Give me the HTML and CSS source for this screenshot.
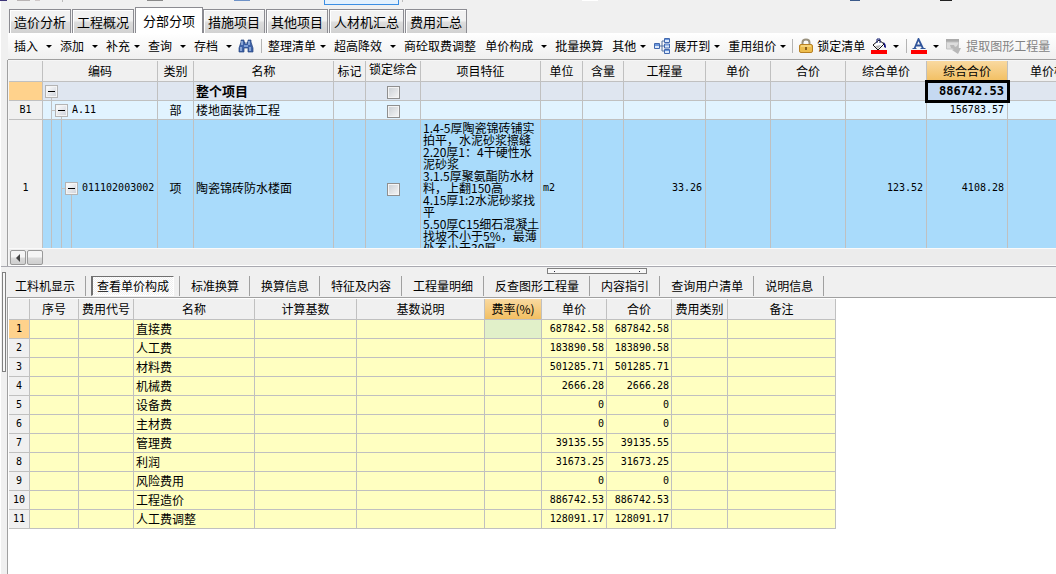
FILE: index.html
```html
<!DOCTYPE html>
<html lang="zh-CN">
<head>
<meta charset="utf-8">
<title>分部分项</title>
<link rel="stylesheet" href="styles.css">
</head>
<body>
<div class="app">
  <div class="ribbon">
    <svg class="ribbon-marks" width="970" height="5" aria-hidden="true">
      <rect x="0" width="7" height="1" fill="#3d3579"/>
      <rect x="17" width="13" height="1" fill="#b9b4b4"/><rect x="35" width="5" height="1" fill="#d0c8c8"/>
      <rect x="62" width="1" height="2" fill="#bbb"/><rect x="147" width="16" height="1" fill="#8a8a8a"/>
      <rect x="234" width="16" height="1" fill="#6f93c8"/>
      <rect x="324.500" y="-2.500" width="74" height="7" fill="#e3f1fe" stroke="#3c8fe4"/>
      <rect x="402" width="1" height="2" fill="#bbb"/><rect x="582" width="16" height="1" fill="#fff"/>
      <rect x="850" width="10" height="1" fill="#3b5a8a"/><rect x="940" width="12" height="1" fill="#222"/>
    </svg>
  </div>
  <nav class="tabs">
    <button class="tab">造价分析</button>
    <button class="tab">工程概况</button>
    <button class="tab active">分部分项</button>
    <button class="tab">措施项目</button>
    <button class="tab">其他项目</button>
    <button class="tab">人材机汇总</button>
    <button class="tab">费用汇总</button>
  </nav>
  <div class="toolbar">
    <button class="tool drop wide">插入</button>
    <button class="tool drop wide">添加</button>
    <button class="tool drop">补充</button>
    <button class="tool drop wide">查询</button>
    <button class="tool drop wide">存档</button>
    <button class="tool icon" aria-label="查找">
      <svg width="16" height="16" viewBox="0 0 16 16"><path d="M3 2h3v2h1v2h2V4h1V2h3v2l2 6v4h-5v-4H6v4H1v-4l2-6z" fill="#3e62a8" stroke="#26457f" stroke-width=".7"/><path d="M4 3v4M11 3v4M3 9v4M12 9v4" stroke="#b9d0f2" stroke-width="1.200"/><path d="M6 7h4v2H6z" fill="#7fa0d8"/></svg>
    </button>
    <span class="sep"></span>
    <button class="tool drop">整理清单</button>
    <button class="tool drop wide">超高降效</button>
    <button class="tool">商砼取费调整</button>
    <button class="tool drop wide">单价构成</button>
    <button class="tool">批量换算</button>
    <button class="tool drop">其他</button>
    <button class="tool drop">
      <svg width="16" height="16" viewBox="0 0 16 16"><path d="M5 8h3M8 3v10M8 3h3M8 8h3M8 13h3" stroke="#52709f" fill="none"/><g fill="#dce9fa" stroke="#4268ae"><path d="M.5 5.500h5v5h-5zM10.500.5h5v4h-5zM10.500 6h5v4h-5zM10.500 11.500h5v4h-5z"/></g><path d="M1 6h4v2H1zM11 1h4v1h-4zM11 6.500h4v1h-4zM11 12h4v1h-4z" fill="#6c98dc"/></svg>展开到</button>
    <button class="tool drop last">重用组价</button>
    <span class="sep"></span>
    <button class="tool lock">
      <svg width="14" height="16" viewBox="0 0 14 16"><path d="M3.500 7V4.500Q3.500 1.500 7 1.500T10.500 4.500V7" fill="none" stroke="#99917e" stroke-width="2"/><rect x=".5" y="6.500" width="13" height="8" rx="1.500" fill="#edbd4e" stroke="#b78023"/><path d="M2 8h10" stroke="#ffe9a5"/><path d="M7 9v3" stroke="#714b14" stroke-width="1.600"/></svg>锁定清单</button>
    <button class="tool drop color" aria-label="背景色">
      <svg width="16" height="16" viewBox="0 0 16 16"><path d="M2 7l6-5 5 4-6 6z" fill="#fff" stroke="#111"/><path d="M6 5V1h3v4" fill="none" stroke="#111a70"/><path d="M4 8l6-1-3 4z" fill="#b5b5b5"/><path d="M12 4q3 1 3 6l-2-1V6z" fill="#101080"/><path d="M0 12h16v4H0z" fill="#f00"/></svg></button>
    <span class="sep"></span>
    <button class="tool drop color" aria-label="字体颜色">
      <svg width="16" height="16" viewBox="0 0 16 16"><path d="M3.500 10.500L7.500 1 12 10.500M5 7.500h5" fill="none" stroke="#31559b" stroke-width="1.800"/><path d="M1.500 10.500h4M9.500 10.500h5" stroke="#31559b"/><path d="M0 12h16v4H0z" fill="#f00"/></svg></button>
    <button class="tool" disabled>
      <svg width="16" height="16" viewBox="0 0 16 16"><path d="M0 1h13v3H0z" fill="#aaa"/><path d="M.5 4h12v7H.5z" fill="#ddd" stroke="#c2c2c2"/><path d="M4 7h4l1 2 2-1 1-2v4h3l-3 6-6-4 2-1-3-1z" fill="#b8b8b8"/></svg>提取图形工程量</button>
  </div>

  <section class="upper">
    <div class="gutter"></div>
    <div class="pane">
      <div class="grid-view">
        <table class="grid bill">
          <colgroup><col class="w34"><col class="w115"><col class="w36"><col class="w140"><col class="w32"><col class="w55"><col class="w120"><col class="w42"><col class="w41"><col class="w82"><col class="w65"><col class="w75"><col class="w81"><col class="w81"><col></colgroup>
          <thead><tr><th></th><th>编码</th><th>类别</th><th>名称</th><th>标记</th><th class="high">锁定综合</th><th>项目特征</th><th>单位</th><th>含量</th><th>工程量</th><th>单价</th><th>合价</th><th>综合单价</th><th class="picked">综合合价</th><th class="cut">单价构成文件</th></tr></thead>
          <tbody>
            <tr class="total"><th class="picked-row"></th><td class="tree t0"><button class="fold" aria-label="折叠"></button></td><td></td><td class="bold">整个项目</td><td></td><td class="mid"><input type="checkbox" aria-label="锁定 整个项目"></td><td></td><td></td><td></td><td></td><td></td><td></td><td></td><td class="num focus">886742.53</td><td></td></tr>
            <tr class="part"><th>B1</th><td class="tree t1"><button class="fold" aria-label="折叠"></button>A.11</td><td class="mid">部</td><td>楼地面装饰工程</td><td></td><td class="mid"><input type="checkbox" aria-label="锁定 楼地面装饰工程"></td><td></td><td></td><td></td><td></td><td></td><td></td><td></td><td class="num">156783.57</td><td></td></tr>
            <tr class="item"><th>1</th><td class="tree t2"><button class="fold" aria-label="折叠"></button>011102003002</td><td class="mid">项</td><td>陶瓷锦砖防水楼面</td><td></td><td class="mid"><input type="checkbox" aria-label="锁定 陶瓷锦砖防水楼面"></td><td class="feature">1.4-5厚陶瓷锦砖铺实<br>拍平，水泥砂浆擦缝<br>2.20厚1：4干硬性水<br>泥砂浆<br>3.1.5厚聚氨酯防水材<br>料，上翻150高<br>4.15厚1:2水泥砂浆找<br>平<br>5.50厚C15细石混凝土<br>找坡不小于5%，最薄<br>处不小于30厚</td><td class="unit">m2</td><td></td><td class="num">33.26</td><td></td><td></td><td class="num">123.52</td><td class="num">4108.28</td><td></td></tr>
          </tbody>
        </table>
      </div>
      <div class="scrollbar"><button aria-label="向左滚动"><svg width="6" height="8" viewBox="0 0 6 8"><path d="M5 0v8L1 4z" fill="#444"/></svg></button><button aria-label="滚动块"></button></div>
    </div>
  </section>

  <section class="lower">
    <div class="gutter"><div class="grip-v"></div></div>
    <div class="detail">
      <div class="grip-row"><div class="grip-h"></div></div>
      <nav class="subtabs">
        <button class="sub">工料机显示</button>
        <button class="sub current"><span>查看单价构成</span></button>
        <button class="sub">标准换算</button>
        <button class="sub">换算信息</button>
        <button class="sub">特征及内容</button>
        <button class="sub">工程量明细</button>
        <button class="sub">反查图形工程量</button>
        <button class="sub">内容指引</button>
        <button class="sub">查询用户清单</button>
        <button class="sub">说明信息</button>
      </nav>
      <div class="pane sheet">
        <table class="grid fees">
          <colgroup><col class="w21"><col class="w49"><col class="w55"><col class="w121"><col class="w102"><col class="w128"><col class="w57"><col class="w65"><col class="w65"><col class="w56"><col class="w108"></colgroup>
          <thead><tr><th></th><th>序号</th><th>费用代号</th><th>名称</th><th>计算基数</th><th>基数说明</th><th class="picked">费率(%)</th><th>单价</th><th>合价</th><th>费用类别</th><th>备注</th></tr></thead>
          <tbody>
            <tr><th class="picked-row">1</th><td></td><td></td><td>直接费</td><td></td><td></td><td class="rate"></td><td class="num">687842.58</td><td class="num">687842.58</td><td></td><td></td></tr>
            <tr><th>2</th><td></td><td></td><td>人工费</td><td></td><td></td><td></td><td class="num">183890.58</td><td class="num">183890.58</td><td></td><td></td></tr>
            <tr><th>3</th><td></td><td></td><td>材料费</td><td></td><td></td><td></td><td class="num">501285.71</td><td class="num">501285.71</td><td></td><td></td></tr>
            <tr><th>4</th><td></td><td></td><td>机械费</td><td></td><td></td><td></td><td class="num">2666.28</td><td class="num">2666.28</td><td></td><td></td></tr>
            <tr><th>5</th><td></td><td></td><td>设备费</td><td></td><td></td><td></td><td class="num">0</td><td class="num">0</td><td></td><td></td></tr>
            <tr><th>6</th><td></td><td></td><td>主材费</td><td></td><td></td><td></td><td class="num">0</td><td class="num">0</td><td></td><td></td></tr>
            <tr><th>7</th><td></td><td></td><td>管理费</td><td></td><td></td><td></td><td class="num">39135.55</td><td class="num">39135.55</td><td></td><td></td></tr>
            <tr><th>8</th><td></td><td></td><td>利润</td><td></td><td></td><td></td><td class="num">31673.25</td><td class="num">31673.25</td><td></td><td></td></tr>
            <tr><th>9</th><td></td><td></td><td>风险费用</td><td></td><td></td><td></td><td class="num">0</td><td class="num">0</td><td></td><td></td></tr>
            <tr><th>10</th><td></td><td></td><td>工程造价</td><td></td><td></td><td></td><td class="num">886742.53</td><td class="num">886742.53</td><td></td><td></td></tr>
            <tr><th>11</th><td></td><td></td><td>人工费调整</td><td></td><td></td><td></td><td class="num">128091.17</td><td class="num">128091.17</td><td></td><td></td></tr>
          </tbody>
        </table>
      </div>
    </div>
  </section>
</div>
</body>
</html>
```
FILE: styles.css
```css
*, *::after { box-sizing: border-box; }
body {
  margin: 0;
  background: #f0f0f0;
  color: #000;
  font: 12px/16px "Noto Sans CJK SC", sans-serif;
  overflow: hidden;
}
button {
  font: inherit;
  color: inherit;
  border: 0;
  padding: 0;
  margin: 0;
  background: none;
  white-space: nowrap;
}
.app { display: flex; flex-direction: column; height: 100vh; border-left: 1px solid #fff; }

.ribbon { height: 7px; overflow: hidden; margin-left: -1px; flex: none; }
.ribbon-marks { display: block; }

/* Page tabs */
.tabs { display: flex; align-items: flex-end; height: 26px; padding-left: 8px; flex: none; }
.tab {
  height: 24px;
  padding: 0 4px;
  font-size: 13px;
  line-height: 20px;
  border: 1px solid #8c8c92;
  border-bottom: 0;
  box-shadow: inset 1px 1px #fff;
  background: linear-gradient(#f2f2f2 45%, #dcdcdc 55%, #d2d2d2);
  margin-right: 1px;
}
.tab.active { height: 26px; padding: 0 7px; background: #fff; margin: 0; }

/* Toolbar */
.toolbar {
  display: flex;
  align-items: center;
  height: 27px;
  margin-left: 7px;
  padding-left: 6px;
  background: linear-gradient(#fff, #f0f0f0);
  border-bottom: 1px solid #a0a0a0;
  overflow: hidden;
  flex: none;
}
.tool { display: flex; align-items: center; gap: 4px; margin-right: 9px; flex: none; }
.tool.drop { margin-right: 8px; }
.tool.wide { gap: 8px; }
.tool.drop::after {
  content: "";
  width: 6px;
  border: 3px solid transparent;
  border-top-color: #000;
  border-bottom: 0;
}
.tool.icon { margin-left: -2px; margin-right: 7px; }
.tool.drop.last { margin-right: 6px; }
.tool.lock { margin-right: 6px; }
.tool.drop.color { gap: 6px; margin-right: 7px; }
.tool:disabled { color: #838383; margin-right: 0; }
.sep { width: 1px; height: 14px; background: #b4b4b4; margin-right: 6px; flex: none; }
.color + .sep { margin-right: 4px; }

/* Panes */
.upper, .lower { display: flex; }
.upper { flex: none; border-bottom: 1px solid #a9a9b0; }
.lower { flex: 1; min-height: 0; }
.gutter { width: 6px; flex: none; }
.pane { flex: 1; min-width: 0; border-left: 1px solid #a0a0a0; padding: 1px 0 0 1px; }
.upper .pane { background: #f6f6f6; }
.grid-view { height: 187px; overflow: hidden; }

.grid { border-collapse: separate; border-spacing: 0; table-layout: fixed; }
.bill { width: 100%; }
.fees { width: 827px; }
.grid th, .grid td {
  padding: 0 2px;
  height: 19px;
  line-height: 16px;
  border-right: 1px solid #c0c0c0;
  border-bottom: 1px solid #c0c0c0;
  white-space: nowrap;
  overflow: hidden;
}
.grid th { font-weight: 400; background: #f0f0f0; padding: 0; }
.grid tbody th { font: 10px/16px "DejaVu Sans Mono", monospace; }
.grid thead th { height: 21px; }
.grid thead th.high { line-height: 12px; padding-bottom: 4px; }
.grid thead th.cut { text-align: left; padding-left: 22px; }
.bill th:last-child, .bill td:last-child { border-right: 0; }
.grid thead th.picked { background: linear-gradient(#f9d9a0, #f2bf62); }
.grid tbody th.picked-row { background: #ffd28c; }
.grid td.num { font: 10px/16px "DejaVu Sans Mono", monospace; text-align: right; }
.grid td.mid { text-align: center; }
.grid td.bold { font-weight: 700; font-size: 13px; }
.total td { background-color: #dfe6f0; }
.part td { background-color: #e1f3ff; }
.item td { background-color: #a9dbfb; }
.item td, .item th { height: 137px; }
.grid td.focus {
  font-size: 12px;
  font-weight: 700;
  background: #c5d9f1;
  outline: 3px solid #000;
  outline-offset: -1px;
}
.grid td.unit { font: 10px/16px "DejaVu Sans Mono", monospace; }
.grid td.feature { line-height: 12px; vertical-align: top; padding-top: 2px; }
.fees td { background: #ffffc1; }
.fees td.rate { background: #e1f0c9; }
.bill td.num { padding-right: 3px; }

/* Outline column: connector lines sit behind the fold buttons */
.grid td.tree { font: 10px/16px "DejaVu Sans Mono", monospace; background-repeat: no-repeat; }
.tree { --line: linear-gradient(#c0c0c0, #c0c0c0); }
.t0 { background-image: var(--line); background-size: 1px 50%; background-position: 8px 100%; }
.grid td.t1 {
  padding-left: 12px;
  background-image: var(--line), var(--line), var(--line);
  background-size: 1px 100%, 1px 50%, 4px 1px;
  background-position: 8px 0, 18px 100%, 8px 50%;
}
.grid td.t2 {
  padding-left: 22px;
  background-image: var(--line), var(--line), var(--line), var(--line);
  background-size: 1px 100%, 1px 100%, 1px 50%, 4px 1px;
  background-position: 8px 0, 18px 0, 28px 100%, 18px 50%;
}
.fold, .bill input {
  appearance: none;
  width: 13px;
  height: 13px;
  margin: 0;
  border: 1px solid #8f8f8f;
  box-shadow: inset 0 0 0 1px #f4f4f4;
  background: linear-gradient(135deg, #c9ced3, #f6f6f6);
  vertical-align: middle;
}
.fold {
  border-color: #b4b4b4;
  margin-right: 4px;
  background: linear-gradient(#000, #000) center / 7px 1px no-repeat, linear-gradient(135deg, #fff, #ccd0d8);
}

.scrollbar {
  display: flex;
  gap: 1px;
  height: 18px;
  padding: 1px;
  background: #ececec;
  border-top: 1px solid #fafafa;
  border-bottom: 1px solid #fff;
}
.scrollbar button {
  display: flex;
  align-items: center;
  justify-content: center;
  width: 16px;
  height: 15px;
  border: 1px solid #999;
  border-radius: 2px;
  background: linear-gradient(#f5f5f5 45%, #d9d9d9 55%, #cfcfcf);
}

/* Detail area */
.detail { flex: 1; min-width: 0; display: flex; flex-direction: column; }
.grip-row { display: flex; justify-content: center; padding: 1px 0 0 130px; height: 7px; }
.grip-h {
  width: 100px;
  height: 6px;
  border: 1px solid #808080;
  background:
    linear-gradient(#223, #223) 6px 2px / 1px 1px no-repeat,
    linear-gradient(#223, #223) 91px 2px / 1px 1px no-repeat,
    #f8f8f8;
}
.grip-v { width: 4px; height: 100px; margin: 5px 0 0 1px; border: 1px solid #808080; background: #f8f8f8; }
.subtabs { display: flex; align-items: center; height: 23px; flex: none; }
.sub { height: 20px; line-height: 18px; padding: 0 10px 0 11px; border-right: 1px solid #a0a0a0; flex: none; }
.sub:first-child { padding-left: 8px; }
.sub.current { padding: 0 5px; }
.sub.current span {
  display: block;
  padding: 0 4px;
  border: 1px solid #fff;
  border-top-color: #707070;
  border-left: 2px solid #707070;
  background: repeating-conic-gradient(#fff 0 25%, #f0f0f0 0 50%) 0 0 / 2px 2px;
}
.sheet { background: #fff; border-top: 1px solid #a0a0a0; }

.w21 { width: 21px; } .w32 { width: 32px; } .w34 { width: 34px; } .w36 { width: 36px; }
.w41 { width: 41px; } .w42 { width: 42px; } .w49 { width: 49px; } .w55 { width: 55px; }
.w56 { width: 56px; } .w57 { width: 57px; } .w65 { width: 65px; } .w75 { width: 75px; }
.w81 { width: 81px; } .w82 { width: 82px; } .w102 { width: 102px; } .w108 { width: 108px; }
.w115 { width: 115px; } .w120 { width: 120px; } .w121 { width: 121px; } .w128 { width: 128px; }
.w140 { width: 140px; }
```
